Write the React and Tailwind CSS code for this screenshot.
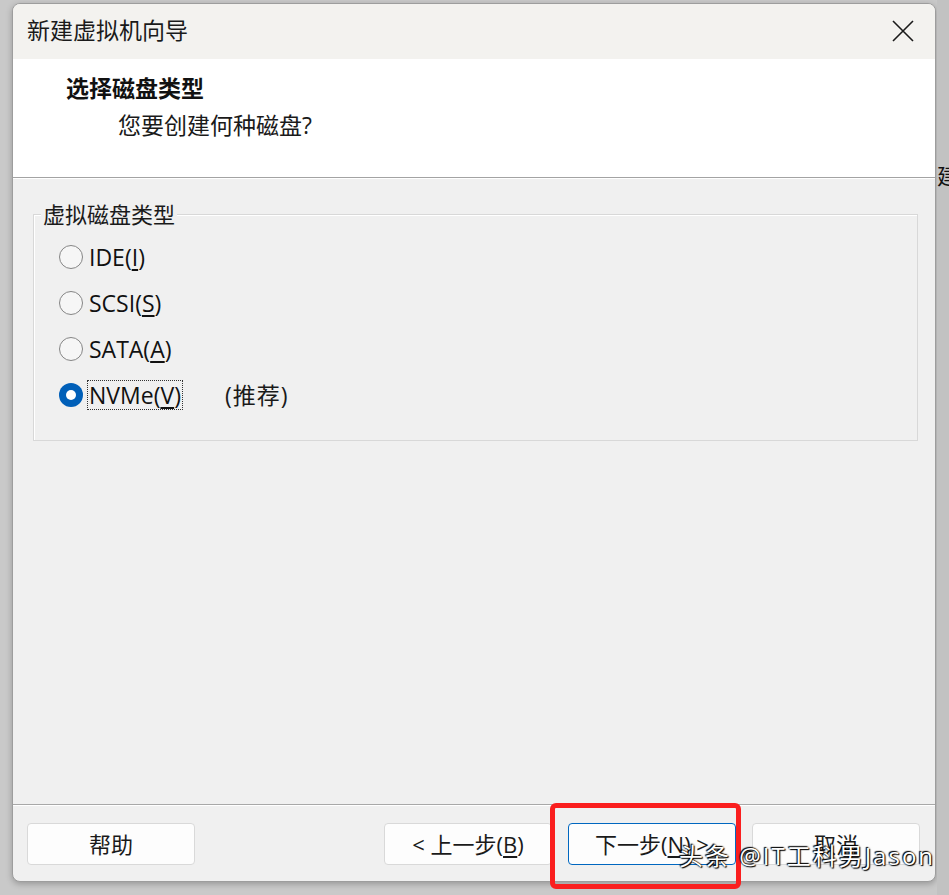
import React, { useState } from "react";

const cjk = "font-['Segoe_UI','Open_Sans','Noto_Sans_CJK_SC',sans-serif]";

const options = [
  { id: "ide", label: "IDE(", key: "I", tail: ")" },
  { id: "scsi", label: "SCSI(", key: "S", tail: ")" },
  { id: "sata", label: "SATA(", key: "A", tail: ")" },
  { id: "nvme", label: "NVMe(", key: "V", tail: ")", note: "(推荐)" },
];

const Radio = ({ checked }) =>
  checked ? (
    <span className="flex h-[24px] w-[24px] shrink-0 items-center justify-center rounded-full bg-[#005fb8]">
      <span className="h-[10px] w-[10px] rounded-full bg-white" />
    </span>
  ) : (
    <span className="h-[24px] w-[24px] shrink-0 rounded-full border-[1.5px] border-[#858585] bg-[#f6f6f6]" />
  );

const Button = ({ children, primary, className = "" }) => (
  <button
    className={
      "h-[42px] w-[168px] rounded-[4px] bg-[#fdfdfd] text-[22px] text-[#1a1a1a] " +
      (primary ? "border border-[#0067c0] " : "border border-[#d9d9d9] ") +
      className
    }
  >
    {children}
  </button>
);

export default function App() {
  const [disk, setDisk] = useState("nvme");

  return (
    <div className={"relative flex h-[895px] w-[949px] overflow-hidden bg-[#c9c9c9] " + cjk}>
      {/* wizard window */}
      <div className="ml-[12px] mt-[3px] flex h-[879px] w-[924px] shrink-0 flex-col overflow-hidden rounded-[8px] border border-[#9d9d9d] bg-[#f0f0f0] shadow-[0_2px_6px_rgba(0,0,0,0.25)]">
        <div className="flex h-[55px] shrink-0 items-center justify-between bg-[#f3f2ef] pb-[3px] pl-[14px] pr-[21px]">
          <span className="text-[23px] text-[#1a1a1a]">新建虚拟机向导</span>
          <svg width="22" height="22" viewBox="0 0 22 22" className="mt-[1px]">
            <path d="M1 1L21 21M21 1L1 21" stroke="#1a1a1a" strokeWidth="1.6" />
          </svg>
        </div>

        <div className="flex h-[119px] shrink-0 flex-col border-b border-[#a3a3a3] bg-white pl-[53px] pt-[14px]">
          <span className="text-[23px] font-semibold leading-[30px] text-[#111]">选择磁盘类型</span>
          <span className="mt-[7px] pl-[52px] text-[23px] leading-[30px] text-[#1a1a1a]">您要创建何种磁盘?</span>
        </div>

        <div className="flex-1 border-t border-white pl-[20px] pr-[17px] pt-[35px]">
          <div className="relative border border-[#d8d8d8] shadow-[inset_1px_1px_0_#fff] pb-[22px] pl-[25px] pt-[19px]">
            <span className="absolute -top-[15px] left-[7px] bg-[#f0f0f0] px-[2px] text-[22px] leading-[28px] text-[#1a1a1a]">
              虚拟磁盘类型
            </span>
            <div className="flex flex-col">
              {options.map((o) => (
                <label
                  key={o.id}
                  onClick={() => setDisk(o.id)}
                  className="flex h-[46px] cursor-default items-center gap-[5px]"
                >
                  <Radio checked={disk === o.id} />
                  <span
                    className={
                      "px-[1px] text-[23px] leading-[28px] text-[#111] " +
                      (disk === o.id ? "outline outline-1 outline-dotted outline-[#333]" : "")
                    }
                  >
                    {o.label}
                    <span className="underline underline-offset-[3px]">{o.key}</span>
                    {o.tail}
                  </span>
                  {o.note && <span className="ml-[38px] text-[23px] tracking-[1px] text-[#1a1a1a]">{o.note}</span>}
                </label>
              ))}
            </div>
          </div>
        </div>

        <div className="h-[77px] shrink-0 border-t border-[#a8a8a8]">
          <div className="flex border-t border-white pl-[14px] pr-[15px] pt-[17px]">
            <Button>帮助</Button>
            <div className="ml-auto flex gap-[16px]">
              <Button>
                &lt; 上一步(<span className="underline underline-offset-[3px]">B</span>)
              </Button>
              <Button primary>
                下一步(<span className="underline underline-offset-[3px]">N</span>) &gt;
              </Button>
              <Button>取消</Button>
            </div>
          </div>
        </div>
      </div>

      {/* window behind, on the right */}
      <div className="ml-[1px] flex h-full min-w-0 flex-1 flex-col overflow-hidden bg-[#c2c2c2] pt-[162px]">
        <span className="text-[22px] leading-[26px] text-[#111]">建</span>
      </div>

      {/* red highlight */}
      <div className="pointer-events-none absolute left-[550px] top-[803px] h-[86px] w-[191px] rounded-[6px] border-[5px] border-[#fa1e1e]" />

      {/* watermark */}
      <div className="pointer-events-none absolute left-[679px] top-[841px] whitespace-nowrap text-[24px] leading-[30px] tracking-[2px] text-white [text-shadow:0_0_2px_#000,1px_1px_1px_#000,-1px_-1px_1px_#000]">
        头条 @IT工科男Jason
      </div>
    </div>
  );
}
